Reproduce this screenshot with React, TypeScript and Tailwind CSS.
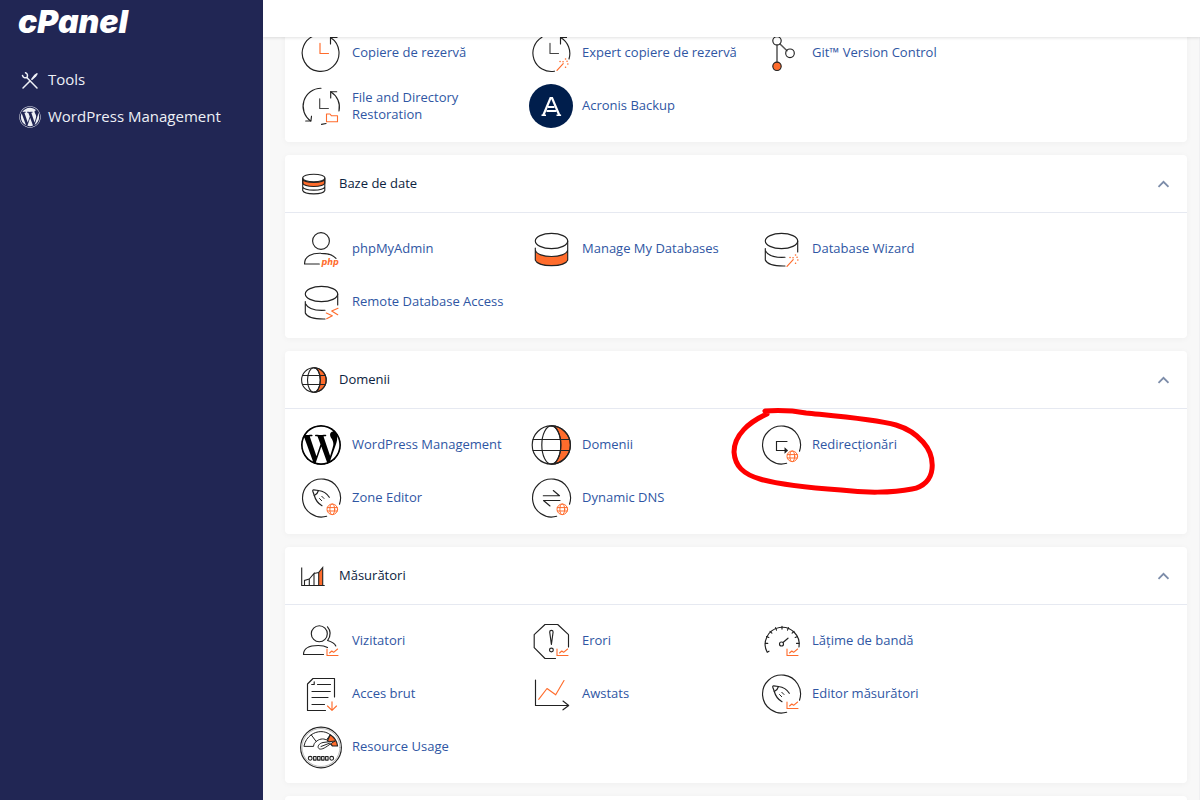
import type { ReactNode } from 'react';
import { FaWordpress, FaWordpressSimple } from 'react-icons/fa';

const ORANGE = '#ff6c2c';

function Icon({ children }: { children: ReactNode }) {
  return (
    <svg
      viewBox="0 0 44 44"
      className="h-11 w-11 shrink-0"
      fill="none"
      stroke="#222"
      strokeWidth="1.15"
      strokeLinecap="round"
      strokeLinejoin="round"
      aria-hidden="true"
    >
      {children}
    </svg>
  );
}

function HeadIcon({ children }: { children: ReactNode }) {
  return (
    <svg viewBox="0 0 26 26" className="h-[26px] w-[26px] shrink-0" fill="none" stroke="#222" strokeWidth="1.1" aria-hidden="true">
      {children}
    </svg>
  );
}

/* Small badges drawn in the lower right corner of an icon */

const GlobeBadge = () => (
  <g stroke={ORANGE} strokeWidth="1">
    <circle cx="33.3" cy="33.3" r="5.3" />
    <ellipse cx="33.3" cy="33.3" rx="2.4" ry="5.3" />
    <path d="M28.3 31.6h10M28.3 35h10" />
  </g>
);

const ChartBadge = () => (
  <g stroke={ORANGE} strokeWidth="1.1">
    <path d="M28 30v6.500h11" />
    <path d="M30.500 34l2.300-2 1.800 1.300 4-3.300" />
  </g>
);

const WandBadge = () => (
  <g stroke={ORANGE} strokeWidth="1.2">
    <path d="M28 39.300l6.200-6.600" />
    <path d="M31 30.500h.1M36.500 28h.1M38.800 33h.1M36.500 36.300h.1M34 30.800h.1M38 30.300h.1" strokeWidth="1.500" />
  </g>
);

const OpenCircle = () => <path d="M27.700 40.300A19 19 0 1 1 40.500 28.200" />;

const Pen = () => (
  <g strokeWidth="1.200">
    <path d="M30.300 21.300C28 17.500 24 15 19.500 14.500L14.700 13.800C13.800 14 13.600 14.500 13.800 15.200L15.300 19.500C16.500 24 19 27.500 23 29.700" />
    <path d="M15.300 19.500C17 18.800 18.800 17 19.500 14.500" />
    <path d="M20.500 22.500l2.200 2.200M22.800 20.300l2.200 2.200" strokeWidth="1" />
  </g>
);

/* Item icons */

const ClockIcon = ({ hand = ORANGE }: { hand?: string }) => (
  <Icon>
    <path d="M17 4.200A18.400 18.400 0 1 0 31.500 6.500" />
    <path d="M31.500 13V6.500H38" />
    <path d="M21 12.300V22.500h8.500" stroke={hand} />
  </Icon>
);

const ClockWandIcon = () => (
  <Icon>
    <path d="M13 6.200A18.400 18.400 0 0 0 25.500 40.200M40 28A18.400 18.400 0 0 0 31.500 6.500" />
    <path d="M31.500 13V6.500H37.500" />
    <path d="M21 12.300V22.500h8.500" stroke="#444" />
    <WandBadge />
  </Icon>
);

const RestoreIcon = () => (
  <Icon>
    <path d="M22 4.300A18 18 0 0 0 11.700 37M31.700 7.700A18 18 0 0 1 40 27M22.500 40.400L27 39.500" />
    <path d="M31.700 14V7.700h6M6.700 37h5.200l.6-4.800" />
    <path d="M20.700 14.700V24.500h8.700" stroke="#444" />
    <path d="M27.500 30h3.500l1.500 1.800h6v6h-11z" stroke={ORANGE} strokeWidth="1.100" />
  </Icon>
);

const GitIcon = () => (
  <Icon>
    <path d="M18 14v17.500M21 13l7 6.700" strokeWidth="1.500" stroke="#555" />
    <circle cx="18" cy="9.800" r="4.200" />
    <circle cx="31" cy="22.300" r="4.300" />
    <circle cx="18" cy="35.300" r="4.200" fill={ORANGE} />
  </Icon>
);

const AcronisIcon = () => (
  <Icon>
    <circle cx="22" cy="22" r="22" fill="#001e4c" stroke="none" />
    <g stroke="#fff" strokeWidth="2.200" strokeLinecap="butt" strokeLinejoin="miter">
      <path d="M14.200 31.500L21.500 14h1.600L30.400 31.500" />
      <path d="M19 23h6.500M17.500 27h10" strokeWidth="1.800" />
      <path d="M12.500 31.300h4.500M27.500 31.300h4.600" strokeWidth="1.500" />
    </g>
  </Icon>
);

const PhpIcon = () => (
  <Icon>
    <circle cx="22" cy="14" r="8.400" />
    <path d="M20.300 37H5.500C5.500 29 13 26 22 26.300C29 26.300 34 28 37 31.300" />
    <text x="22.500" y="37.500" fill={ORANGE} stroke="none" fontFamily="DejaVu Sans, sans-serif" fontStyle="italic" fontWeight="700" fontSize="8">
      php
    </text>
  </Icon>
);

const ManageDbIcon = () => (
  <Icon>
    <path d="M6.300 23C8 31.700 37 31.700 38.700 23V33C36 40.500 9 40.500 6.300 33z" fill={ORANGE} stroke="none" />
    <ellipse cx="22.500" cy="14" rx="16.200" ry="7.600" />
    <path d="M6.300 21V33C9 40.500 36 40.500 38.700 33V14M6.300 23C8 31.700 37 31.700 38.700 23" />
  </Icon>
);

const OpenDatabase = () => (
  <>
    <ellipse cx="22.500" cy="14" rx="16.200" ry="7.600" />
    <path d="M38.700 14V25M6.300 21.500V33C8 37 15 39.200 26 39M6.300 23.500C9 29 17 30.800 26 30.300" />
  </>
);

const DbWizardIcon = () => (
  <Icon>
    <OpenDatabase />
    <WandBadge />
  </Icon>
);

const RemoteDbIcon = () => (
  <Icon>
    <OpenDatabase />
    <path d="M27.300 33l6 2.700-5.600 3M39 28.300l-6.300 2.700 6 3.700" stroke={ORANGE} />
  </Icon>
);

const WordPressIcon = () => (
  <span className="flex h-11 w-11 shrink-0 items-center justify-center text-black">
    <span className="flex h-10 w-10 items-center justify-center overflow-hidden rounded-full">
      <FaWordpressSimple size={42} className="shrink-0" aria-hidden="true" />
    </span>
  </span>
);

const GlobeIcon = () => (
  <Icon>
    <path d="M22.300 2.900A19.100 19.100 0 0 1 22.300 41.100A9.500 19.100 0 0 0 22.300 2.900" fill={ORANGE} />
    <circle cx="22.300" cy="22" r="19.100" />
    <ellipse cx="22.300" cy="22" rx="9.500" ry="19.100" />
    <path d="M4 16.500h36.600M4 27.500h36.600" />
  </Icon>
);

const RedirectIcon = () => (
  <Icon>
    <OpenCircle />
    <path d="M28 18.500H17.500v9h9" strokeLinejoin="miter" />
    <path d="M26 25l2.800 2.500-2.800 2.500z" fill="#222" strokeWidth=".6" />
    <GlobeBadge />
  </Icon>
);

const ZoneIcon = () => (
  <Icon>
    <OpenCircle />
    <Pen />
    <GlobeBadge />
  </Icon>
);

const DnsIcon = () => (
  <Icon>
    <OpenCircle />
    <path d="M14.300 19.700H30.500L24.300 14.500M31 24.500H14.500L21 30" />
    <GlobeBadge />
  </Icon>
);

const VisitorsIcon = () => (
  <Icon>
    <circle cx="20.300" cy="14.700" r="8" />
    <path d="M24.500 35.500H4.500C4.500 29 11 26.500 19.300 26.500C23 26.500 26 27 28.500 28.500" />
    <path d="M28.500 7.800C33 13 31 18 28.600 21.500C32 22.500 35.500 24 36.800 27" />
    <ChartBadge />
  </Icon>
);

const ErrorsIcon = () => (
  <Icon>
    <path d="M26.500 39.500H16L5.200 28.700V15.700L16 5.500H28.700L39.500 15.700V28" />
    <path d="M20.700 13a1.700 1.700 0 0 1 3.400 0L22.400 25.500z" />
    <circle cx="22.400" cy="31" r="1.900" />
    <ChartBadge />
  </Icon>
);

const BandwidthIcon = () => (
  <Icon>
    <path d="M10 32.200L8.200 33.300A17 17 0 1 1 40 28" />
    <path d="M6.300 24.300h2.500M11 12.300l1.900 1.900M23 7.300v2.800M35 12.300l-1.900 1.900M40 24.300h-2.500M16.500 8.700l1 2.400M29.500 8.700l-1 2.400M7.500 17.500l2.300 1M38.500 17.500l-2.300 1" />
    <circle cx="22.500" cy="25" r="2" />
    <path d="M24 23.500l5-4.300" />
    <ChartBadge />
  </Icon>
);

const RawIcon = () => (
  <Icon>
    <path d="M26.500 38.500H8.500V12L14 6.500H35.500V25" />
    <path d="M12.700 12.500h2.500V9.700M18.500 12.500h13M13 19.500h18.300M13 25.500h16M13 32.500h12.500" />
    <path d="M33 29.700v8.500M28.500 34l4.500 4.300 4.500-4.300" stroke={ORANGE} />
  </Icon>
);

const AwstatsIcon = () => (
  <Icon>
    <path d="M6.500 8v25.500h33M34 29l5.700 4.500-5.700 4.300" />
    <path d="M9.700 27.300L18 16.500l8.700 6.300L35 8.500" stroke={ORANGE} />
  </Icon>
);

const EditorIcon = () => (
  <Icon>
    <OpenCircle />
    <Pen />
    <ChartBadge />
  </Icon>
);

const ResourceIcon = () => (
  <Icon>
    <circle cx="22" cy="22.500" r="20.400" strokeWidth="1.100" />
    <circle cx="22" cy="22.500" r="19" strokeWidth=".5" stroke="#777" />
    <path d="M31.300 9.800C35.500 12.500 38 16 38.600 21L33.500 21L28.500 15.500z" fill={ORANGE} />
    <path d="M5 21C6 16 8.500 12.500 12.200 9.800L17.200 16.500C15.500 17.800 14.800 19 14.600 21zM12.200 9.800C18 5.500 26 5.500 31.300 9.800L27.500 15C24 13 20 14 17.200 16.500" strokeWidth="1" />
    <path d="M36 16L24 17.500C17.500 19 18 25 22.500 24C26 23.500 30 19.500 36 16zM22 21.500L31 18" fill="#fff" strokeWidth="1" />
    <g strokeWidth="1.100">
      <circle cx="11.200" cy="33.300" r="1.900" />
      <rect x="14.600" y="31.500" width="2.500" height="3.600" />
      <rect x="18.600" y="31.500" width="2.500" height="3.600" />
      <rect x="22.600" y="31.500" width="2.500" height="3.600" />
      <rect x="26.600" y="31.500" width="2.500" height="3.600" />
      <circle cx="32.700" cy="33.300" r="1.900" />
    </g>
  </Icon>
);

/* Section header icons */

const DbHead = () => (
  <HeadIcon>
    <path d="M1.700 8C3 12.500 22.500 12.500 23.800 8V12.300C22 16.500 3.500 16.500 1.700 12.300z" fill={ORANGE} />
    <ellipse cx="12.800" cy="7" rx="11.100" ry="3.800" fill="#fff" />
    <path d="M1.700 7V19.500C3.500 24 22 24 23.800 19.500V7M1.700 16C3.500 20.200 22 20.200 23.800 16" />
  </HeadIcon>
);

const GlobeHead = () => (
  <HeadIcon>
    <path d="M12.900.700A12.300 12.300 0 0 1 12.900 25.300A6.400 12.300 0 0 0 12.900.700" fill={ORANGE} />
    <circle cx="12.900" cy="13" r="12.300" />
    <ellipse cx="12.900" cy="13" rx="6.400" ry="12.300" />
    <path d="M1.300 8.500h23.200M1.300 17.500h23.200" />
  </HeadIcon>
);

const StatsHead = () => (
  <HeadIcon>
    <path d="M17.700 22.500V9.500L21.700 4.500V22.500z" fill={ORANGE} />
    <path d="M.7 4.500v18h23M3.500 22.500V17.500L8.300 16V22.500M8.300 16L13 10.500V22.500M13 10.500L17.700 9.500" />
  </HeadIcon>
);

/* Hand-drawn ring round the redirects link */
const MarkerRing = () => (
  <svg
    viewBox="0 0 210 92"
    className="pointer-events-none absolute -top-3 -left-[30px] h-[92px] w-[210px]"
    fill="none"
    stroke="#f00"
    strokeWidth="5"
    strokeLinecap="round"
    strokeLinejoin="round"
    aria-hidden="true"
  >
    <path d="M38 8L36 5C51 4 66 5 77 7C107 10 145 13 167 19C177 22 187 28 194 36C202 45 204 54 203 63C202 73 195 81 183 83C163 87 135 87 112 84C84 82 52 79 31 73C14 68 6 60 5 46C5 29 20 16 38 8" />
  </svg>
);

type Item = { label: ReactNode; icon: ReactNode; ringed?: boolean };

function Items({ items }: { items: Item[] }) {
  return (
    <ul className="grid grid-cols-[repeat(auto-fill,229px)] gap-x-px pt-[9px] pr-2 pb-[10px] pl-[14px]">
      {items.map((item, i) => (
        <li key={i} className="relative flex h-[53px] items-center">
          <a href="#" className="flex items-center gap-[9px] text-[13px] leading-[17px] text-[#2f56a3]">
            {item.icon}
            <span>{item.label}</span>
          </a>
          {item.ringed && <MarkerRing />}
        </li>
      ))}
    </ul>
  );
}

const cardClass = 'rounded-[4px] bg-white shadow-[0_1px_6px_rgba(0,0,0,0.04)]';

function Section({ title, icon, items }: { title: string; icon: ReactNode; items: Item[] }) {
  return (
    <section className={cardClass}>
      <header className="flex h-[58px] items-center gap-3 border-b border-[#e6e9f1] pr-[18px] pl-4">
        {icon}
        <h2 className="flex-1 text-[13px] leading-[17px] text-[#0c2340]">{title}</h2>
        <button type="button" aria-label={`Collapse ${title}`} className="flex h-6 w-3 items-center justify-center">
          <svg viewBox="0 0 12 8" className="h-2 w-3" fill="none" stroke="#7c8ca9" strokeWidth="1.800" aria-hidden="true">
            <path d="M1.500 6.800l5-5 5 5" />
          </svg>
        </button>
      </header>
      <Items items={items} />
    </section>
  );
}

const files: Item[] = [
  { label: 'Copiere de rezervă', icon: <ClockIcon /> },
  { label: 'Expert copiere de rezervă', icon: <ClockWandIcon /> },
  { label: 'Git™ Version Control', icon: <GitIcon /> },
  { label: <>File and Directory<br />Restoration</>, icon: <RestoreIcon /> },
  { label: 'Acronis Backup', icon: <AcronisIcon /> },
];

const databases: Item[] = [
  { label: 'phpMyAdmin', icon: <PhpIcon /> },
  { label: 'Manage My Databases', icon: <ManageDbIcon /> },
  { label: 'Database Wizard', icon: <DbWizardIcon /> },
  { label: 'Remote Database Access', icon: <RemoteDbIcon /> },
];

const domains: Item[] = [
  { label: 'WordPress Management', icon: <WordPressIcon /> },
  { label: 'Domenii', icon: <GlobeIcon /> },
  { label: 'Redirecționări', icon: <RedirectIcon />, ringed: true },
  { label: 'Zone Editor', icon: <ZoneIcon /> },
  { label: 'Dynamic DNS', icon: <DnsIcon /> },
];

const metrics: Item[] = [
  { label: 'Vizitatori', icon: <VisitorsIcon /> },
  { label: 'Erori', icon: <ErrorsIcon /> },
  { label: 'Lățime de bandă', icon: <BandwidthIcon /> },
  { label: 'Acces brut', icon: <RawIcon /> },
  { label: 'Awstats', icon: <AwstatsIcon /> },
  { label: 'Editor măsurători', icon: <EditorIcon /> },
  { label: 'Resource Usage', icon: <ResourceIcon /> },
];

export default function App() {
  return (
    <div className="flex h-screen overflow-hidden font-['Open_Sans','Noto_Sans',sans-serif]">
      <aside className="w-[263px] shrink-0 bg-[#212654] text-[#eef0f6]">
        <a href="#" className="block pt-1 pl-[18px] font-['Inter',sans-serif] text-[32px] leading-9 font-black text-white italic">
          cPanel
        </a>
        <nav className="mt-[21px] flex flex-col pl-[19px] text-[15px] leading-[37px]">
          <a href="#" className="flex items-center gap-[7px]">
            <svg viewBox="0 0 22 22" className="h-[22px] w-[22px]" fill="none" stroke="currentColor" strokeLinecap="round" aria-hidden="true">
              <path d="M4 19L11 12" strokeWidth="1.500" />
              <path d="M12.800 10.200L15.800 6.200l2.500-1.700-1.700 2.700-3.600 3.200z" strokeWidth="1.300" fill="currentColor" />
              <path d="M8 8.800L18 19" strokeWidth="1.500" />
              <path d="M6.500 3.700C8.500 4.500 9 6.500 8 8.300C6 9.500 4 8.500 3.500 6.500" strokeWidth="1.500" />
            </svg>
            Tools
          </a>
          <a href="#" className="flex items-center gap-[7px]">
            <FaWordpress size={22} aria-hidden="true" />
            WordPress Management
          </a>
        </nav>
      </aside>
      <div className="flex min-w-0 flex-1 flex-col">
        <header className="z-10 h-[37px] shrink-0 bg-white shadow-[0_1px_3px_rgba(0,0,0,0.12)]" />
        <main className="min-h-0 flex-1 overflow-hidden border-r border-[#f0f0f2] bg-[#f8f8f8] pr-3 pl-[22px]">
          <div className="-mt-5 flex flex-col gap-[13px]">
            <section className={cardClass}>
              <Items items={files} />
            </section>
            <Section title="Baze de date" icon={<DbHead />} items={databases} />
            <Section title="Domenii" icon={<GlobeHead />} items={domains} />
            <Section title="Măsurători" icon={<StatsHead />} items={metrics} />
            <section className={`${cardClass} h-[58px] shrink-0`} />
          </div>
        </main>
      </div>
    </div>
  );
}
